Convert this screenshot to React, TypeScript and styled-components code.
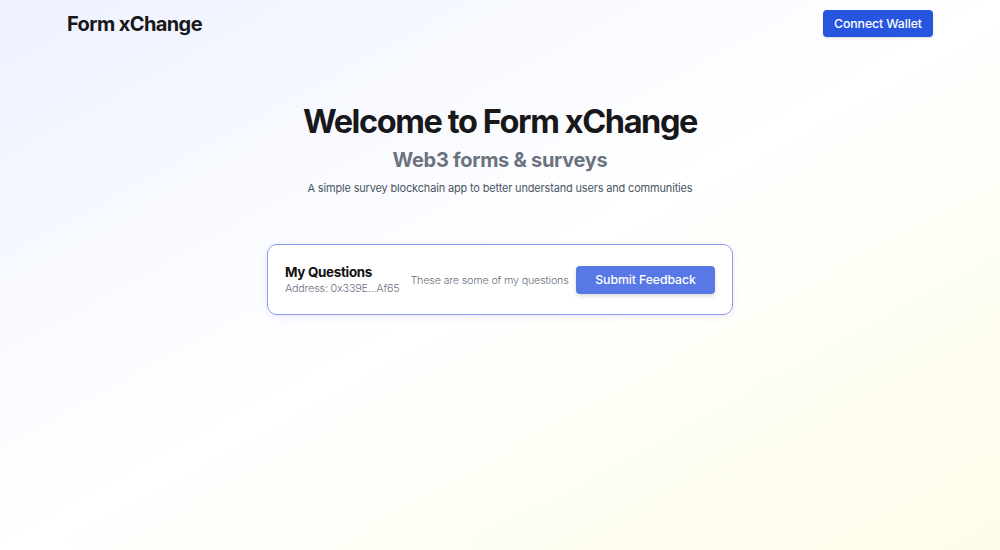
import React from 'react';
import styled, { createGlobalStyle } from 'styled-components';

const GlobalStyle = createGlobalStyle`
  html, body {
    margin: 0;
    padding: 0;
  }
  body {
    font-family: Inter, "Noto Sans", sans-serif;
    color: #111827;
  }
`;

const Page = styled.div`
  width: 100%;
  min-height: 550px;
  background: linear-gradient(to bottom right, #eef2ff 0%, #ffffff 50%, #fefce8 100%);
  display: flex;
  flex-direction: column;
`;

const Header = styled.header`
  display: flex;
  align-items: center;
  justify-content: space-between;
  padding: 10px 67px 0 67px;
  height: 27px;
`;

const Logo = styled.div`
  font-size: 20px;
  font-weight: 700;
  letter-spacing: -0.6px;
  color: #18181b;
`;

const WalletButton = styled.button`
  font-family: Inter, sans-serif;
  font-size: 12.3px;
  font-weight: 500;
  letter-spacing: -0.1px;
  color: #fff;
  background: #2656e0;
  border: none;
  border-radius: 4px;
  width: 110px;
  height: 27px;
  box-shadow: 0 1px 2px rgba(0, 0, 0, 0.15);
  cursor: pointer;
`;

const Hero = styled.section`
  display: flex;
  flex-direction: column;
  align-items: center;
  margin-top: 65px;
`;

const Title = styled.h1`
  margin: 0;
  font-size: 32.5px;
  font-weight: 700;
  letter-spacing: -1.4px;
  line-height: 40px;
  color: #18181b;
`;

const Subtitle = styled.h2`
  margin: 4px 0 0 0;
  font-size: 20px;
  font-weight: 700;
  line-height: 28px;
  letter-spacing: -0.3px;
  color: #6b7280;
`;

const Tagline = styled.p`
  margin: 5px 0 0 0;
  font-size: 11px;
  line-height: 18px;
  letter-spacing: -0.17px;
  color: #4b5563;
`;

const Card = styled.div`
  align-self: center;
  margin-top: 47px;
  width: 466px;
  height: 71px;
  box-sizing: border-box;
  background: #fff;
  border: 1px solid #8b9cf0;
  border-radius: 10px;
  box-shadow: 0 2px 6px rgba(99, 102, 241, 0.12);
  display: flex;
  align-items: center;
  padding: 0 17px;
  white-space: nowrap;
`;

const CardInfo = styled.div`
  display: flex;
  flex-direction: column;
  margin-right: 11px;
`;

const CardTitle = styled.div`
  font-size: 13.4px;
  font-weight: 700;
  line-height: 18px;
  letter-spacing: -0.3px;
  color: #111;
`;

const CardAddress = styled.div`
  font-size: 10.8px;
  font-weight: 300;
  line-height: 16px;
  letter-spacing: -0.2px;
  color: #6b7280;
`;

const CardNote = styled.div`
  font-size: 10.8px;
  font-weight: 300;
  letter-spacing: -0.2px;
  color: #6b7280;
  flex: 1;
  margin-top: 1px;
`;

const FeedbackButton = styled.button`
  flex-shrink: 0;
  font-family: Inter, sans-serif;
  font-size: 12.3px;
  font-weight: 500;
  letter-spacing: -0.1px;
  color: #fff;
  background: #5878e5;
  border: none;
  border-radius: 4px;
  width: 139px;
  height: 28px;
  box-shadow: 0 2px 4px rgba(0, 0, 0, 0.15);
  cursor: pointer;
`;

const App: React.FC = () => {
  return (
    <Page>
      <GlobalStyle />
      <Header>
        <Logo>Form xChange</Logo>
        <WalletButton>Connect Wallet</WalletButton>
      </Header>
      <Hero>
        <Title>Welcome to Form xChange</Title>
        <Subtitle>Web3 forms &amp; surveys</Subtitle>
        <Tagline>A simple survey blockchain app to better understand users and communities</Tagline>
      </Hero>
      <Card>
        <CardInfo>
          <CardTitle>My Questions</CardTitle>
          <CardAddress>Address: 0x339E...Af65</CardAddress>
        </CardInfo>
        <CardNote>These are some of my questions</CardNote>
        <FeedbackButton>Submit Feedback</FeedbackButton>
      </Card>
    </Page>
  );
};

export default App;
